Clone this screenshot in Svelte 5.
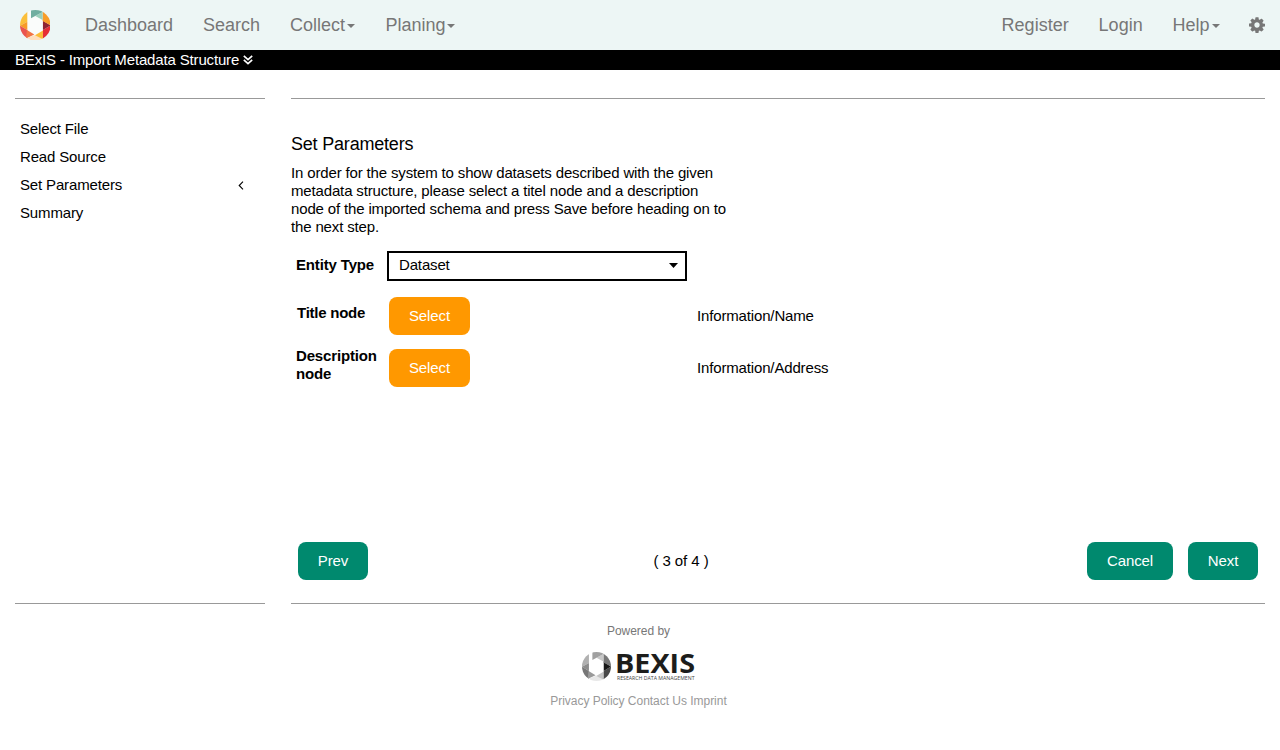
<script>
  const left = [
    { label: 'Dashboard', width: 88 },
    { label: 'Search', width: 57 },
    { label: 'Collect', width: 65.5, menu: true },
    { label: 'Planing', width: 70, menu: true }
  ];
  const right = [
    { label: 'Register', width: 67 },
    { label: 'Login', width: 44 },
    { label: 'Help', width: 47, menu: true }
  ];
  const steps = ['Select File', 'Read Source', 'Set Parameters', 'Summary'];
  const current = 2;

  const colours = ['#fbbf3b', '#f79b28', '#e9544f', '#f37443', '#ffdfbd', '#fcbd35', '#e62e35', '#8f2432', '#f99d28', '#9bd0bb', '#70aea0'];
  const greys = ['#b0b0b0', '#8c8c8c', '#777777', '#9a9a9a', '#e8e8e8', '#c4c4c4', '#494949', '#171717', '#777777', '#c8c8c8', '#a0a0a0'];
</script>

{#snippet ring(c, size, id, hole)}
  <svg class="ring" width={size} height={size} viewBox="0 0 92 92">
    <clipPath {id}><circle cx="46" cy="46" r="46" /></clipPath>
    <g clip-path="url(#{id})">
      <path d="M21 0H70V70L46 80L21 68Z" fill={hole} />
      <path d="M0 0H22V35L0 47Z" fill={c[0]} />
      <path d="M0 47L22 35V60Z" fill={c[1]} />
      <path d="M0 47L22 60V92H0Z" fill={c[2]} />
      <path d="M21 60L43 74L18 86Z" fill={c[3]} />
      <path d="M15 87L44 75L72 87V92H15Z" fill={c[4]} />
      <path d="M45 76L69 62V88Z" fill={c[5]} />
      <path d="M69 60L92 46V92H69Z" fill={c[6]} />
      <path d="M69 32L92 46L69 60Z" fill={c[7]} />
      <path d="M68 0H92V46L68 33Z" fill={c[8]} />
      <path d="M46 18L68 6V30Z" fill={c[9]} />
      <path d="M33 0H68V6L33 25Z" fill={c[10]} />
    </g>
  </svg>
{/snippet}

{#snippet item(n)}
  <a class="nav-item" href="#top" style:width="{n.width}px">{n.label}{#if n.menu}<i class="caret"></i>{/if}</a>
{/snippet}

<header>
  <a class="brand" href="#top" aria-label="Home">{@render ring(colours, 30.6, 'ring-colour', '#fafcfb')}</a>
  <nav>{#each left as n}{@render item(n)}{/each}</nav>
  <nav class="end">
    {#each right as n}{@render item(n)}{/each}
    <svg class="gear" width="16" height="16" viewBox="0 128 1536 1536">
      <path fill="#777" fill-rule="evenodd" d="M1024 896q0 106-75 181t-181 75-181-75-75-181 75-181 181-75 181 75 75 181zm512-109v222q0 12-8 23t-20 13l-185 28q-19 54-39 91 35 50 107 138 10 12 10 25t-9 23q-27 37-99 108t-94 71q-12 0-26-9l-138-108q-44 23-91 38-16 136-29 186-7 28-36 28H657q-14 0-24.500-8.500T621 1634l-28-184q-49-16-90-37l-141 107q-10 9-25 9-14 0-25-11-126-114-165-168-7-10-7-23 0-12 8-23 15-21 51-66.500t54-70.500q-27-50-41-99l-183-27q-13-2-21-12.500t-8-23.500V783q0-12 8-23t19-13l186-28q14-46 39-92-40-57-107-138-10-12-10-24 0-10 9-23 26-36 98.500-107.500T337 286q13 0 26 10l138 107q44-23 91-38 16-136 29-186 7-28 36-28h222q14 0 24.500 8.500T915 181l28 184q49 16 90 37l142-107q9-9 24-9 13 0 25 10 129 119 165 170 7 8 7 22 0 12-8 23-15 21-51 66.500t-54 70.500q26 50 41 98l183 28q13 2 21 12.500t8 23.500z" />
    </svg>
  </nav>
</header>

<div class="titlebar">
  <span>BExIS - Import Metadata Structure</span>
  <svg width="10" height="10" viewBox="0 0 10 10" fill="none" stroke="#fff" stroke-width="1.600"><path d="M.8 .8L5 4.600L9.200 .8M.8 4.800L5 8.600L9.200 4.800" /></svg>
</div>

<div class="columns">
  <aside>
    {#each steps as s, i}
      <div class="step"><span>{s}</span>{#if i === current}<svg width="6" height="9" viewBox="0 0 6 9" fill="none" stroke="#000" stroke-width="1.100"><path d="M5 .7L1.200 4.500L5 8.300" /></svg>{/if}</div>
    {/each}
  </aside>

  <main>
    <h2>Set Parameters</h2>
    <p>In order for the system to show datasets described with the given<br />metadata structure, please select a titel node and a description<br />node of the imported schema and press Save before heading on to<br />the next step.</p>

    <div class="form">
      <b class="entity">Entity Type</b>
      <div class="select"><span>Dataset</span><i></i></div>
      <b class="title-label">Title node</b>
      <button class="btn orange">Select</button><span>Information/Name</span>
      <b class="desc-label">Description<br />node</b>
      <button class="btn orange">Select</button><span>Information/Address</span>
    </div>

    <div class="actions">
      <button class="btn prev">Prev</button>
      <span class="count">( 3 of 4 )</span>
      <button class="btn cancel">Cancel</button>
      <button class="btn next">Next</button>
    </div>
  </main>
</div>

<footer>
  <div class="powered">Powered by</div>
  <div class="logo">
    {@render ring(greys, 29, 'ring-grey', '#fff')}
    <svg class="name" width="80" height="31" viewBox="0 0 80 31">
      <text x="-1" y="20.700" class="word" textLength="80" lengthAdjust="spacingAndGlyphs">BEXIS</text>
      <text x="1" y="28" class="tag" textLength="77.500" lengthAdjust="spacingAndGlyphs">RESEARCH DATA MANAGEMENT</text>
    </svg>
  </div>
  <div class="links"><a href="#top">Privacy Policy</a> <a href="#top">Contact Us</a> <a href="#top">Imprint</a></div>
</footer>

<style>
  :global(body) { margin: 0; background: #fff; color: #000; font: 15px/18px "Liberation Sans", Arial, sans-serif; }
  :global(*) { box-sizing: border-box; }
  a { color: inherit; text-decoration: none; }
  .ring { display: block; flex: none; }
  header { height: 50px; background: #edf6f5; color: #777; display: flex; font-size: 18px; line-height: 20px; padding-top: 15px; }
  .brand { margin: -5.500px 34.500px 0 19.800px; height: 31px; }
  nav { display: flex; gap: 30px; }
  .end { margin-left: auto; padding-right: 15px; }
  .end .nav-item { margin-left: -.4px; margin-right: .4px; }
  .nav-item { display: flex; align-items: center; white-space: nowrap; height: 20px; }
  .caret { border: 4px solid transparent; border-top-color: #777; border-bottom: 0; margin: 2px 0 0 2px; }
  .gear { margin: 2px 0 0 -1px; }
  .titlebar { height: 20px; background: #000; color: #fff; display: flex; padding-left: 15px; line-height: 20px; letter-spacing: -.155px; }
  .titlebar span { width: 224px; white-space: nowrap; }
  .titlebar svg { margin: 5px 0 0 4px; }
  .columns { display: grid; grid-template-columns: 250px 974px; column-gap: 26px; padding: 28px 15px 0; letter-spacing: -.152px; }
  aside, main { height: 506px; border: solid #999; border-width: 1px 0; }
  aside { padding: 16px 21px 0 5px; }
  .step { height: 28px; line-height: 28px; display: flex; justify-content: space-between; align-items: center; }
  h2 { font-weight: 400; font-size: 18px; line-height: 20px; margin: 35px 0 10px; letter-spacing: -.2px; }
  p { margin: 0; white-space: nowrap; }
  .form { display: grid; grid-template-columns: 91px 305px auto; grid-template-rows: 32px 38px 38px; gap: 14px 5px; align-items: center; margin-top: 15px; }
  .form b { padding-left: 5px; white-space: nowrap; }
  .form .entity { margin-top: -4px; }
  .form .title-label { padding-left: 6px; margin-top: -6px; letter-spacing: -.25px; }
  .form .desc-label { margin-top: -6px; }
  .select { grid-column: 2 / 4; align-self: start; width: 300px; height: 30px; border: 2px solid #000; display: flex; justify-content: space-between; padding: 3px 7px 0 10px; }
  .select i { width: 9px; height: 5px; margin-top: 7px; background: #000; clip-path: polygon(0 0, 100% 0, 50% 100%); }
  .btn { height: 38px; border: 0; border-radius: 8px; background: #00896e; color: #fff; font: inherit; letter-spacing: -.1px; padding: 0; }
  .orange { background: #ff9800; width: 81px; margin-left: 2px; }
  .actions { display: flex; align-items: center; margin-top: 155px; padding: 0 7px; }
  .prev, .next { width: 70px; }
  .count { margin-left: 285.500px; letter-spacing: -.08px; }
  .cancel { width: 86px; margin: 0 15px 0 auto; }
  footer { display: flex; flex-direction: column; align-items: center; font-size: 12px; line-height: 17px; padding: 19px 3px 0 0; color: #777; letter-spacing: -.03px; }
  .logo { display: flex; gap: 5px; height: 31px; margin: 12px 0 10px; letter-spacing: 0; }
  .name { overflow: visible; }
  .word { font: 700 27px "Open Sans", sans-serif; fill: #1d1d1b; }
  .tag { font: 5.500px "Open Sans", sans-serif; fill: #444; }
  .links { color: #999; }
</style>
